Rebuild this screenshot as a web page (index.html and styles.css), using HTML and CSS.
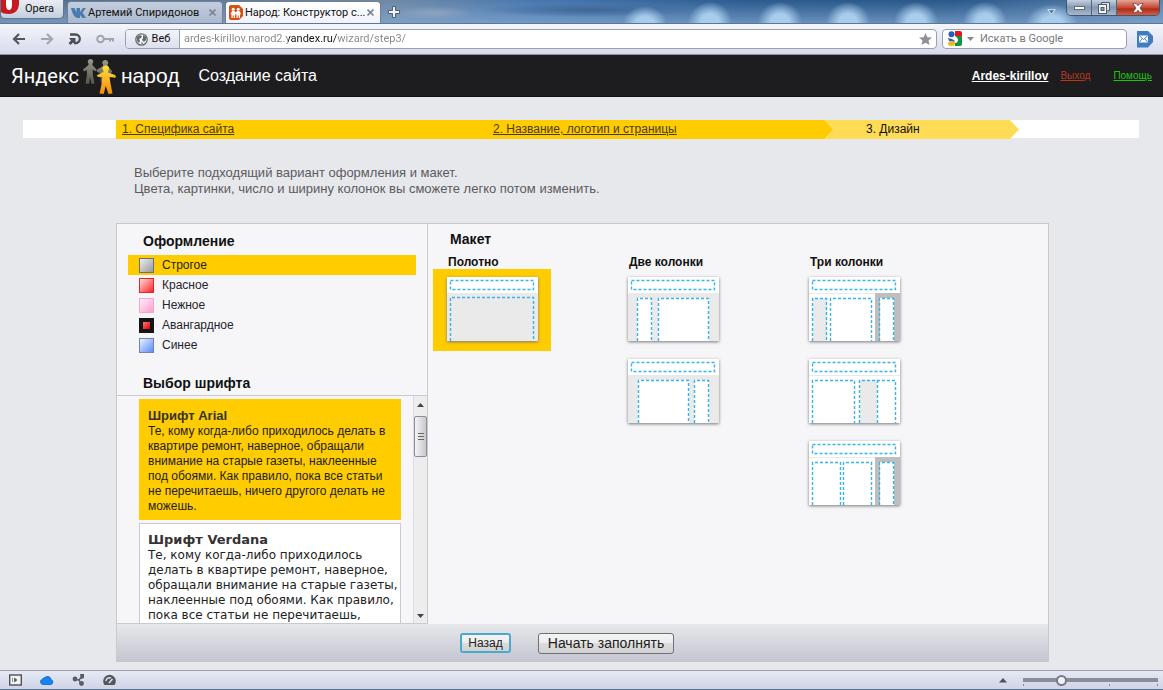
FILE: index.html
```html
<!DOCTYPE html>
<html lang="ru">
<head>
<meta charset="utf-8">
<title>Народ: Конструктор сайтов</title>
<link rel="stylesheet" href="styles.css">
</head>
<body>
<div class="titlebar">
  <button class="opera-btn" type="button">
    <svg width="18" height="15" viewBox="0 0 18 15" aria-hidden="true"><path d="M0 0h18v3c0 7-4 11-10 11-4 0-7-1-8-2z" fill="#c51a1f"/><path d="M5 0h6v4c0 4-1 6-3 6s-3-2-3-6z" fill="#fff"/></svg>
    <span>Opera</span>
  </button>
  <div class="tab">
    <svg width="15" height="12" viewBox="0 0 15 12" aria-hidden="true"><path d="M0 1h3.500l2 4.500V1H9v4l3-4h3l-3.500 4.500L15 11h-3.500L9 8v3H7C3.500 11 1.500 7 0 1z" fill="#4a7ab0"/></svg>
    <span class="tab-title">Артемий Спиридонов</span>
    <button class="tab-close" type="button" aria-label="Закрыть"><svg width="7" height="7" viewBox="0 0 7 7"><path d="M.5.5l6 6M6.500.5l-6 6" stroke="#7c8591" stroke-width="1.600"/></svg></button>
  </div>
  <div class="tab tab-active">
    <svg width="14" height="15" viewBox="0 0 14 15" aria-hidden="true"><path d="M2 0h8l4 4v7l-4 4H2a2 2 0 0 1-2-2V2a2 2 0 0 1 2-2z" fill="#dc4f12"/><circle cx="4.200" cy="4.200" r="1.500" fill="#fff"/><circle cx="9.200" cy="4.200" r="1.500" fill="#fff"/><path d="M1.500 9l1.500-3h2.500l1.200 1.500L8 6h2.500L12 9l-1 .5V13H9.700v-2.500h-1V13H7.400V9.500H6V13H4.700v-2.500h-1V13H2.500V9.500z" fill="#fff"/></svg>
    <span class="tab-title">Народ: Конструктор с...</span>
    <button class="tab-close" type="button" aria-label="Закрыть"><svg width="7" height="7" viewBox="0 0 7 7"><path d="M.5.5l6 6M6.500.5l-6 6" stroke="#7c8591" stroke-width="1.600"/></svg></button>
  </div>
  <button class="new-tab" type="button" aria-label="Новая вкладка"><svg width="12" height="12" viewBox="0 0 12 12"><path d="M4.500 .5h3v4h4v3h-4v4h-3v-4h-4v-3h4z" fill="#f0f4f8" stroke="#4c5d70"/></svg></button>
  <button class="tab-menu" type="button" aria-label="Список вкладок"><svg width="9" height="6" viewBox="0 0 9 6"><path d="M.8.8h7.400L4.500 5z" fill="#4e6b90" stroke="#e4edf6"/></svg></button>
  <div class="window-buttons">
    <button type="button" aria-label="Свернуть"><svg width="11" height="6" viewBox="0 0 11 6"><rect x=".5" y="1.500" width="10" height="3" fill="#fff" stroke="#5d6b7c"/></svg></button>
    <button type="button" aria-label="Развернуть"><svg width="12" height="12" viewBox="0 0 12 12"><path d="M3.500 2.500v-2h8v8h-2" fill="#dce5ee" stroke="#4c5a6b"/><rect x=".5" y="2.500" width="8" height="9" fill="#f5f8fa" stroke="#4c5a6b"/><rect x="3" y="5.500" width="3" height="3" fill="#8ba0b8" stroke="#4c5a6b"/></svg></button>
    <button class="close" type="button" aria-label="Закрыть окно"><svg width="12" height="10" viewBox="0 0 12 10"><path d="M.8.6h3.500L6 2.800 7.700.6h3.500L8 5l3.200 4.400H7.700L6 7.200 4.300 9.400H.8L4 5z" fill="#fff" stroke="#6f4040" stroke-width=".8"/></svg></button>
  </div>
</div>

<div class="toolbar">
  <div class="nav">
    <button type="button" aria-label="Назад"><svg width="14" height="14" viewBox="0 0 14 14"><path d="M13 7H3M7 2L2 7l5 5" fill="none" stroke="#53565c" stroke-width="2.200"/></svg></button>
    <button type="button" aria-label="Вперед"><svg width="14" height="14" viewBox="0 0 14 14"><path d="M1 7h10M7 2l5 5-5 5" fill="none" stroke="#a2a6ad" stroke-width="2.200"/></svg></button>
    <button type="button" aria-label="Обновить"><svg width="14" height="14" viewBox="0 0 14 14"><path d="M2 2.500h5.500a4.300 4.300 0 0 1 0 8.600H6" fill="none" stroke="#4c4f55" stroke-width="2.300"/><path d="M1 6h6.500v6.500L5 10.500 2.500 13 .5 11 3 8.500z" fill="#4c4f55"/></svg></button>
    <button type="button" aria-label="Пароли"><svg width="18" height="10" viewBox="0 0 18 10"><circle cx="4.500" cy="5" r="3.300" fill="none" stroke="#a2a5ac" stroke-width="2"/><path d="M8 5h9v2.500M14 5v2.500" fill="none" stroke="#a2a5ac" stroke-width="2"/></svg></button>
  </div>
  <div class="address">
    <button class="web-btn" type="button">
      <svg width="13" height="13" viewBox="0 0 13 13" aria-hidden="true"><circle cx="6.500" cy="6.500" r="5.700" fill="#f5f6f8" stroke="#666970" stroke-width="1.300"/><path d="M2 4l3-2 2 1-1 2-2 1 1 2-1 2-2-2zM8 2l3 2v3L9 9 7 7l1-2zM6 9l2 1-1 2z" fill="#666970"/></svg>
      <span>Веб</span>
    </button>
    <input class="url" type="text" aria-label="Адрес" value="ardes-kirillov.narod2.yandex.ru/wizard/step3/">
    <button class="star" type="button" aria-label="Закладка"><svg width="13" height="12" viewBox="0 0 13 12"><path d="M6.500 0l1.800 4.200 4.700.4-3.500 3 1 4.400-4-2.300L2.500 12l1-4.400L0 4.600l4.700-.4z" fill="#8e9197"/></svg></button>
  </div>
  <div class="search">
    <svg width="16" height="16" viewBox="0 0 16 16" aria-hidden="true"><path d="M8 0h5a2 2 0 0 1 2 2v3H8z" fill="#e5161f"/><path d="M8 5h7v8a2 2 0 0 1-2 2H8z" fill="#14953b"/><path d="M0 5h8v6H0z" fill="#fff"/><circle cx="4.500" cy="3.300" r="3" fill="#2261c4"/><path d="M1 7l4 1 3 2-1 1-5-1z" fill="#2261c4"/><ellipse cx="4.500" cy="12.500" rx="3.500" ry="2.500" fill="#f4b41b"/><path d="M8 5c2 1 3 3 3 4s-1 3-3 3V9L6 7z" fill="#fff"/></svg>
    <svg width="7" height="4" viewBox="0 0 7 4" aria-hidden="true"><path d="M0 0h7L3.500 4z" fill="#85888e"/></svg>
    <input type="search" aria-label="Искать в Google" placeholder="Искать в Google">
  </div>
  <button class="mail" type="button" aria-label="Почта"><svg width="17" height="17" viewBox="0 0 17 17"><path d="M1 0h11l5 5v6l-5 5.500H1z" fill="#3e7dc4"/><rect x="3" y="4.500" width="9" height="7" fill="#fff"/><path d="M3.500 5l4 3.500 4-3.500M3.500 11l2.500-3M11.500 11L9 8" fill="none" stroke="#4482c6"/></svg></button>
</div>

<header class="site-header">
  <a class="logo" href="#">
    <span class="logo-ya">Яндекс</span>
    <svg width="34" height="38" viewBox="0 0 34 38" aria-hidden="true">
      <defs><linearGradient id="gold" x1="0" y1="0" x2="0" y2="1"><stop offset="0" stop-color="#ffe03a"/><stop offset="1" stop-color="#f58a0b"/></linearGradient>
      <linearGradient id="stone" x1="0" y1="0" x2="0" y2="1"><stop offset="0" stop-color="#9b9888"/><stop offset="1" stop-color="#55544e"/></linearGradient></defs>
      <g fill="url(#stone)"><path d="M7.500 2a2.700 2.700 0 0 1 2 4.600L9.300 8l4.200 4.500-1 1.800-3-1.800.5 6 1.500 8-3 .5L7 20l-1 7-3.500-.5L4 18l-.3-5L1 14.500 0 12.500 5.500 8V6.600A2.700 2.700 0 0 1 7.500 2z"/><path d="M22.500 3a2.800 2.800 0 0 1 2 4.700L24.500 9l4.500 5-1 3-4 9h-6l-1-10-3-1-.5-2L20 9V7.700A2.800 2.800 0 0 1 22.500 3z"/></g>
      <path d="M23 8.500a3 3 0 0 1 2.200 5.200l-.2 1.800 7 2.500 1 2-1 .8-5.500-.8 1 6.500 2 10-4 .5-2.800-8-2 8-4.200-.5 2-9 .8-7.500L15 20l-1.200-1.700L20.500 15v-1.300A3 3 0 0 1 23 8.500z" fill="url(#gold)"/>
    </svg>
    <span class="logo-narod">народ</span>
  </a>
  <span class="site-title">Создание сайта</span>
  <nav class="user-links">
    <a class="user" href="#">Ardes-kirillov</a>
    <a class="exit" href="#">Выход</a>
    <a class="help" href="#">Помощь</a>
  </nav>
</header>

<main class="page">
  <ol class="steps">
    <li class="step step-1"><a href="#">1. Специфика сайта</a></li>
    <li class="step step-2"><a href="#">2. Название, логотип и страницы</a></li>
    <li class="step step-3"><span>3. Дизайн</span></li>
  </ol>
  <p class="intro">Выберите подходящий вариант оформления и макет.<br>Цвета, картинки, число и ширину колонок вы сможете легко потом изменить.</p>

  <form class="panel">
    <div class="columns">
      <section class="left">
        <h2 class="heading">Оформление</h2>
        <div class="themes">
          <label class="theme"><input type="radio" name="theme" checked><i class="swatch gray"></i>Строгое</label>
          <label class="theme"><input type="radio" name="theme"><i class="swatch red"></i>Красное</label>
          <label class="theme"><input type="radio" name="theme"><i class="swatch pink"></i>Нежное</label>
          <label class="theme"><input type="radio" name="theme"><i class="swatch black"></i>Авангардное</label>
          <label class="theme"><input type="radio" name="theme"><i class="swatch blue"></i>Синее</label>
        </div>
        <h2 class="heading heading-font">Выбор шрифта</h2>
        <div class="font-box">
          <div class="fonts">
            <label class="font arial"><input type="radio" name="font" checked><b>Шрифт Arial</b><span>Те, кому когда-либо приходилось делать в квартире ремонт, наверное, обращали внимание на старые газеты, наклеенные под обоями. Как правило, пока все статьи не перечитаешь, ничего другого делать не можешь.</span></label>
            <label class="font verdana"><input type="radio" name="font"><b>Шрифт Verdana</b><span>Те, кому когда-либо приходилось делать в квартире ремонт, наверное, обращали внимание на старые газеты, наклеенные под обоями. Как правило, пока все статьи не перечитаешь,</span></label>
          </div>
          <div class="scrollbar" aria-hidden="true">
            <svg width="7" height="4" viewBox="0 0 7 4"><path d="M0 4h7L3.500 0z" fill="#444"/></svg>
            <div class="thumb"><svg width="6" height="7" viewBox="0 0 6 7"><path d="M0 .5h6M0 3.500h6M0 6.500h6" stroke="#666"/></svg></div>
            <svg class="down" width="7" height="4" viewBox="0 0 7 4"><path d="M0 0h7L3.500 4z" fill="#444"/></svg>
          </div>
        </div>
      </section>
      <section class="right">
        <h2 class="heading heading-layout">Макет</h2>
        <div class="layouts">
          <div class="layout-col">
            <h3>Полотно</h3>
            <label class="layout"><input type="radio" name="layout" aria-label="Полотно" checked>
              <svg width="91" height="64" viewBox="0 0 91 64"><path class="w" d="M0 0h91v64H0z"/><path class="l" d="M0 16h91v48H0z"/><path class="d" d="M3.500 3.500h83v9h-83zM3.500 64V20.500h83V64"/></svg></label>
          </div>
          <div class="layout-col">
            <h3>Две колонки</h3>
            <label class="layout"><input type="radio" name="layout" aria-label="Две колонки, меню слева">
              <svg width="91" height="64" viewBox="0 0 91 64"><path class="w" d="M0 0h91v64H0z"/><path class="l" d="M0 16h91v48H0z"/><path class="w" d="M9 21h15v43H9zM30 21h51v43H30z"/><path class="d" d="M3.500 3.500h83v9h-83zM9.500 64V21.500h14V64M30.500 64V21.500h50V64"/></svg></label>
            <label class="layout"><input type="radio" name="layout" aria-label="Две колонки, меню справа">
              <svg width="91" height="64" viewBox="0 0 91 64"><path class="w" d="M0 0h91v64H0z"/><path class="l" d="M0 16h91v48H0z"/><path class="w" d="M10 21h51v43H10zM66 21h15v43H66z"/><path class="d" d="M3.500 3.500h83v9h-83zM10.500 64V21.500h50V64M66.500 64V21.500h14V64"/></svg></label>
          </div>
          <div class="layout-col">
            <h3>Три колонки</h3>
            <label class="layout"><input type="radio" name="layout" aria-label="Три колонки, широкая в центре">
              <svg width="91" height="64" viewBox="0 0 91 64"><path class="w" d="M0 0h91v64H0z"/><path class="l" d="M0 16h91v1H0zM4 21h14v43H4z"/><path class="g" d="M66 16h25v48H66z"/><path class="w" d="M71 21h14v43H71z"/><path class="d" d="M3.500 3.500h83v9h-83zM3.500 64V21.500h14V64M21.500 64V21.500h41V64M70.500 64V21.500h14V64"/></svg></label>
            <label class="layout"><input type="radio" name="layout" aria-label="Три колонки, широкая слева">
              <svg width="91" height="64" viewBox="0 0 91 64"><path class="w" d="M0 0h91v64H0z"/><path class="l" d="M0 16h91v1H0zM51 21h17v43H51z"/><path class="d" d="M3.500 3.500h83v9h-83zM3.500 64V21.500h42V64M50.500 64V21.500h36V64M68.500 64V21.500"/></svg></label>
            <label class="layout"><input type="radio" name="layout" aria-label="Три колонки, две равные">
              <svg width="91" height="64" viewBox="0 0 91 64"><path class="w" d="M0 0h91v64H0z"/><path class="l" d="M0 16h91v1H0z"/><path class="g" d="M66 16h25v48H66z"/><path class="w" d="M71 21h14v43H71z"/><path class="d" d="M3.500 3.500h83v9h-83zM3.500 64V21.500h28V64M34.500 64V21.500h28V64M70.500 64V21.500h14V64"/></svg></label>
          </div>
        </div>
      </section>
    </div>
    <div class="actions">
      <button class="btn btn-back" type="button">Назад</button>
      <button class="btn btn-next" type="button">Начать заполнять</button>
    </div>
  </form>
</main>

<footer class="statusbar">
  <button type="button" aria-label="Панели"><svg width="13" height="12" viewBox="0 0 13 12"><rect x=".7" y="1" width="11.600" height="10" fill="#f1f2f5" stroke="#4e5156" stroke-width="1.400"/><path d="M3.500 4v4M5.500 4l2.500 2-2.500 2z" fill="#4e5156" stroke="#4e5156" stroke-width=".6"/></svg></button>
  <button type="button" aria-label="Opera Link"><svg width="14" height="12" viewBox="0 0 14 12"><path d="M3 10.500a2.700 2.700 0 0 1-.5-5.300A3 3 0 0 1 5 3.500a3.500 3.500 0 0 1 6 2 2.600 2.600 0 0 1 0 5z" fill="#1583f0" stroke="#0c63c9" stroke-width=".8"/></svg></button>
  <button type="button" aria-label="Opera Unite"><svg width="13" height="12" viewBox="0 0 13 12"><path d="M2.500 5.500L7 6l3-4M7 6l2 4" stroke="#5a5d63" stroke-width="1.500" fill="none"/><circle cx="3" cy="5" r="2.400" fill="#5a5d63"/><path d="M8 0h4v4L9 5z" fill="#5a5d63"/><circle cx="9.500" cy="9.500" r="2.400" fill="#5a5d63"/></svg></button>
  <button type="button" aria-label="Opera Turbo"><svg width="13" height="12" viewBox="0 0 13 12"><path d="M1.500 11A6.300 6.300 0 1 1 11.500 11z" fill="#54575d"/><path d="M3 7a3.500 3.500 0 0 1 5-3M6 9l3.500-4" stroke="#dfe2ee" stroke-width="1.500" fill="none"/></svg></button>
  <button class="zoom-menu" type="button" aria-label="Масштаб"><svg width="8" height="5" viewBox="0 0 8 5"><path d="M0 4.500h8L4 0z" fill="#4e5156"/></svg></button>
  <input class="zoom" type="range" min="0" max="100" value="27" aria-label="Масштаб страницы">
</footer>
</body>
</html>
```
FILE: styles.css
```css
* { box-sizing: border-box; }

body {
  margin: 0;
  min-height: 100vh;
  display: flex;
  flex-direction: column;
  background: #e7e8ec;
  color: #111;
  font: 12px/16px "Liberation Sans", Arial, sans-serif;
}

button, input { font: inherit; color: inherit; }
button { padding: 0; border: 0; background: none; display: flex; align-items: center; justify-content: center; }
svg { display: block; flex: none; }
h2, h3, p, ol { margin: 0; padding: 0; }
label input { position: absolute; opacity: 0; }

/* Browser tabs */
.titlebar {
  display: flex;
  align-items: flex-end;
  height: 24px;
  overflow: hidden;
  font: 11px/16px Roboto, "Open Sans", sans-serif;
  background:
    radial-gradient(ellipse 22px 18px at 645px 24px, #a8cdec 40%, transparent),
    radial-gradient(ellipse 22px 20px at 710px 22px, #a8cdec 40%, transparent),
    radial-gradient(ellipse 22px 20px at 780px 22px, #a8cdec 40%, transparent),
    radial-gradient(ellipse 22px 20px at 848px 22px, #a8cdec 40%, transparent),
    radial-gradient(ellipse 22px 20px at 916px 22px, #a8cdec 40%, transparent),
    radial-gradient(ellipse 22px 20px at 985px 22px, #a8cdec 40%, transparent),
    radial-gradient(ellipse 26px 20px at 1052px 24px, #a8cdec 40%, transparent),
    radial-gradient(ellipse 110px 7px at 590px 10px, #3f6795, transparent),
    radial-gradient(ellipse 40px 7px at 434px 13px, #8fa3bd, transparent),
    linear-gradient(#ffffff00, #86abd4aa),
    linear-gradient(90deg, #506a86, #6f89a5 34%, #4777b0 46%, #2b5a8e 64%, #285788 82%, #5f83ac);
  border-bottom: 1px solid #5c7899;
}
.opera-btn {
  align-self: flex-start;
  align-items: flex-start;
  justify-content: flex-start;
  gap: 6px;
  width: 64px;
  height: 19px;
  background: linear-gradient(#e9edf3, #c3cfdf);
  border: 1px solid #65758a;
  border-top: 0;
  border-radius: 0 0 5px 5px;
}
.opera-btn span { padding-top: 1px; }
.tab {
  display: flex;
  align-items: center;
  gap: 2px;
  width: 156px;
  height: 22px;
  margin-left: 3px;
  padding: 0 6px 0 3px;
  background: linear-gradient(#c3cddc, #aab9cf);
  border: 1px solid #6f8097;
  border-bottom: 0;
  border-radius: 4px 4px 0 0;
}
.tab-active { background: linear-gradient(#fff, #eff2fa); margin-left: 2px; }
.tab-title { flex: 1; white-space: nowrap; }
.new-tab { margin: 0 0 5px 7px; }
.tab-menu { margin: 0 10px 8px auto; }
.window-buttons { display: flex; align-self: flex-start; margin-right: 3px; border: 1px solid #45566c; border-top: 0; border-radius: 0 0 5px 5px; overflow: hidden; }
.window-buttons button { width: 25px; height: 15px; background: linear-gradient(#c4d0df, #8598b1 50%, #a5b8cf); border-right: 1px solid #53657c; }
.window-buttons .close { width: 42px; background: linear-gradient(#e4a595, #c64a36 50%, #ae2c1d 60%, #d65c40); border: 0; }

/* Address bar */
.toolbar {
  display: flex;
  align-items: center;
  height: 31px;
  padding: 0 10px 0 12px;
  background: linear-gradient(#f4f6fb, #d7dbec);
  border-bottom: 1px solid #8e93a3;
  font: 11px/16px Roboto, "Open Sans", sans-serif;
}
.nav { display: flex; align-items: center; gap: 14px; width: 113px; }
.address { display: flex; flex: 1; align-items: stretch; height: 20px; background: #fff; border: 1px solid #9a9fac; border-radius: 4px; overflow: hidden; }
.web-btn { gap: 4px; width: 54px; background: linear-gradient(#f3f5fa, #dde0ed); border-right: 1px solid #9a9fac; }
.url {
  flex: 1;
  min-width: 0;
  padding: 0 4px;
  border: 0;
  outline: 0;
  background: linear-gradient(90deg, #84878c 108px, #15161c 108px 157px, #84878c 157px);
  -webkit-background-clip: text;
  background-clip: text;
  -webkit-text-fill-color: transparent;
}
.star { width: 22px; }
.search { display: flex; align-items: center; gap: 4px; width: 185px; height: 20px; margin: 0 9px 0 5px; padding: 0 4px; background: #fff; border: 1px solid #9a9fac; border-radius: 4px; }
.search input { flex: 1; min-width: 0; margin-left: 2px; padding: 0; border: 0; outline: 0; background: none; }
.search input::placeholder { color: #77797f; opacity: 1; }

/* Site header */
.site-header { display: flex; align-items: center; height: 42px; padding: 0 11px; background: #1d1d20; color: #fff; border-bottom: 1px solid #111; }
.logo { display: flex; align-items: center; color: #fff; text-decoration: none; }
.logo-ya { width: 72px; font: 20px/28px Roboto, sans-serif; }
.logo-narod { margin-left: 4px; font-size: 21px; line-height: 24px; }
.site-title { margin-left: 19px; font-size: 16px; }
.user-links { display: flex; align-items: center; margin-left: auto; font-size: 10px; }
.user-links .user { margin-right: 12px; color: #fff; font-size: 12px; font-weight: bold; }
.user-links .exit { margin-right: 23px; color: #b8381b; }
.user-links .help { color: #1fc50d; }

/* Wizard steps */
.page { flex: 1; padding: 23px 24px 8px 23px; }
.steps { display: grid; grid-template-columns: 371fr 346fr 186fr; height: 18px; padding: 0 120px 0 93px; background: #fff; list-style: none; line-height: 19px; white-space: nowrap; }
.step { padding-left: 6px; }
.step a { color: #4a3c12; }
.step-1 { background: #fc0; }
.step-2 { z-index: 1; background: #fc0; clip-path: polygon(0 0, calc(100% - 9px) 0, 100% 50%, calc(100% - 9px) 100%, 0 100%); }
.step-3 { margin-left: -9px; padding-left: 42px; background: #ffdc55; clip-path: polygon(0 0, calc(100% - 9px) 0, 100% 50%, calc(100% - 9px) 100%, 0 100%); }
.intro { margin: 27px 0 26px 111px; color: #5b5b5e; font-size: 13px; }

/* Design panel */
.panel { margin: 0 90px 0 93px; background: #f6f6f9; border: 1px solid #c9cad1; border-bottom: 0; }
.columns { display: flex; min-height: 400px; }
.left { width: 311px; border-right: 1px solid #c9cad1; }
.heading { padding: 9px 0 0 26px; font-size: 14px; line-height: 16px; }
.themes { margin: 6px 11px 0; }
.theme { display: flex; align-items: center; height: 20px; padding-left: 11px; color: #24242a; }
.theme:has(:checked) { background: #fc0; }
.swatch { width: 15px; height: 15px; margin-right: 8px; border: 1px solid; }
.gray { background: linear-gradient(135deg, #eee, #999); border-color: #6e6e7a; }
.red { background: linear-gradient(135deg, #fdd, #f22); border-color: #d22b33; }
.pink { background: linear-gradient(135deg, #fff0f8, #ff9dce); border-color: #f5a8cd; }
.black { background: linear-gradient(135deg, #f77, #d00); border: 4px solid #151515; }
.blue { background: linear-gradient(135deg, #e8f4ff, #5b88ff); border-color: #7485ab; }
.heading-font { padding: 20px 0 4px 26px; }
.font-box { display: flex; height: 229px; border-top: 1px solid #c9cad1; border-bottom: 1px solid #c9cad1; }
.fonts { flex: 1; padding: 3px 12px 0 22px; overflow-y: auto; scrollbar-width: none; }
.font { display: block; margin-bottom: 3px; padding: 7px 8px; background: #fff; border: 1px solid #c9cad1; line-height: 15px; color: #222; }
.font:has(:checked) { background: #fc0; border-color: #fc0; }
.font b, .font span { display: block; }
.font b { font-size: 13px; line-height: 17px; color: #333; }
.arial { height: 121px; }
.verdana { min-height: 136px; padding-right: 0; font-family: "DejaVu Sans", Verdana, sans-serif; }
.scrollbar { display: flex; flex-direction: column; align-items: center; width: 14px; padding: 7px 0 5px; background: #ededee; border-left: 1px solid #dcdce0; }
.thumb { display: flex; align-items: center; justify-content: center; width: 13px; height: 41px; margin-top: 9px; background: linear-gradient(90deg, #f4f4f4, #c9c9cc); border: 1px solid #8f8f93; border-radius: 2px; }
.down { margin-top: auto; }

/* Layout choice */
.right { flex: 1; }
.heading-layout { padding: 7px 0 0 22px; }
.layouts { display: grid; grid-template-columns: repeat(3, 181px); padding: 8px 0 0 5px; }
.layout-col h3 { padding-left: 15px; font-size: 12px; line-height: 14px; }
.layout { display: block; width: 118px; height: 82px; padding: 8px 14px; }
.layout:has(:checked) { background: #fc0; }
.layout svg { box-shadow: 0 1px 3px #777; }
.w { fill: #fff; }
.l { fill: #eaeaea; }
.g { fill: #bebebe; }
.d { fill: none; stroke: #35b5ea; stroke-width: 1.4; stroke-dasharray: 3 2; }

/* Buttons */
.actions { display: flex; align-items: center; gap: 27px; height: 38px; padding-left: 343px; background: linear-gradient(#e7e8eb, #c3c5d0); }
.btn { border: 1px solid #707074; border-radius: 3px; background: linear-gradient(#f4f4f4, #ececec 50%, #dcdcdc 50%, #d2d2d2); color: #222; }
.btn-back { width: 51px; height: 20px; border: 2px solid #4aa9cf; }
.btn-next { width: 136px; height: 21px; font-size: 14px; }

/* Status bar */
.statusbar { display: flex; align-items: center; gap: 18px; height: 20px; padding: 0 5px 0 9px; background: linear-gradient(#e6e9f5, #cfd4e6); border-top: 1px solid #9da0ab; border-bottom: 1px solid #55718f; }
.zoom-menu { margin-left: auto; margin-right: -2px; }
.zoom {
  appearance: none;
  width: 135px;
  height: 14px;
  margin: 0;
  background:
    linear-gradient(#8a8d97, #8a8d97) center / 100% 4px no-repeat,
    linear-gradient(#8a8d97, #8a8d97) 0 11px / 1px 2px no-repeat,
    linear-gradient(#8a8d97, #8a8d97) 64% 11px / 1px 2px no-repeat,
    linear-gradient(#8a8d97, #8a8d97) 100% 11px / 1px 2px no-repeat;
}
.zoom::-webkit-slider-thumb { appearance: none; width: 11px; height: 11px; border: 2px solid #777a84; border-radius: 50%; background: #f0f2fa; }
```
